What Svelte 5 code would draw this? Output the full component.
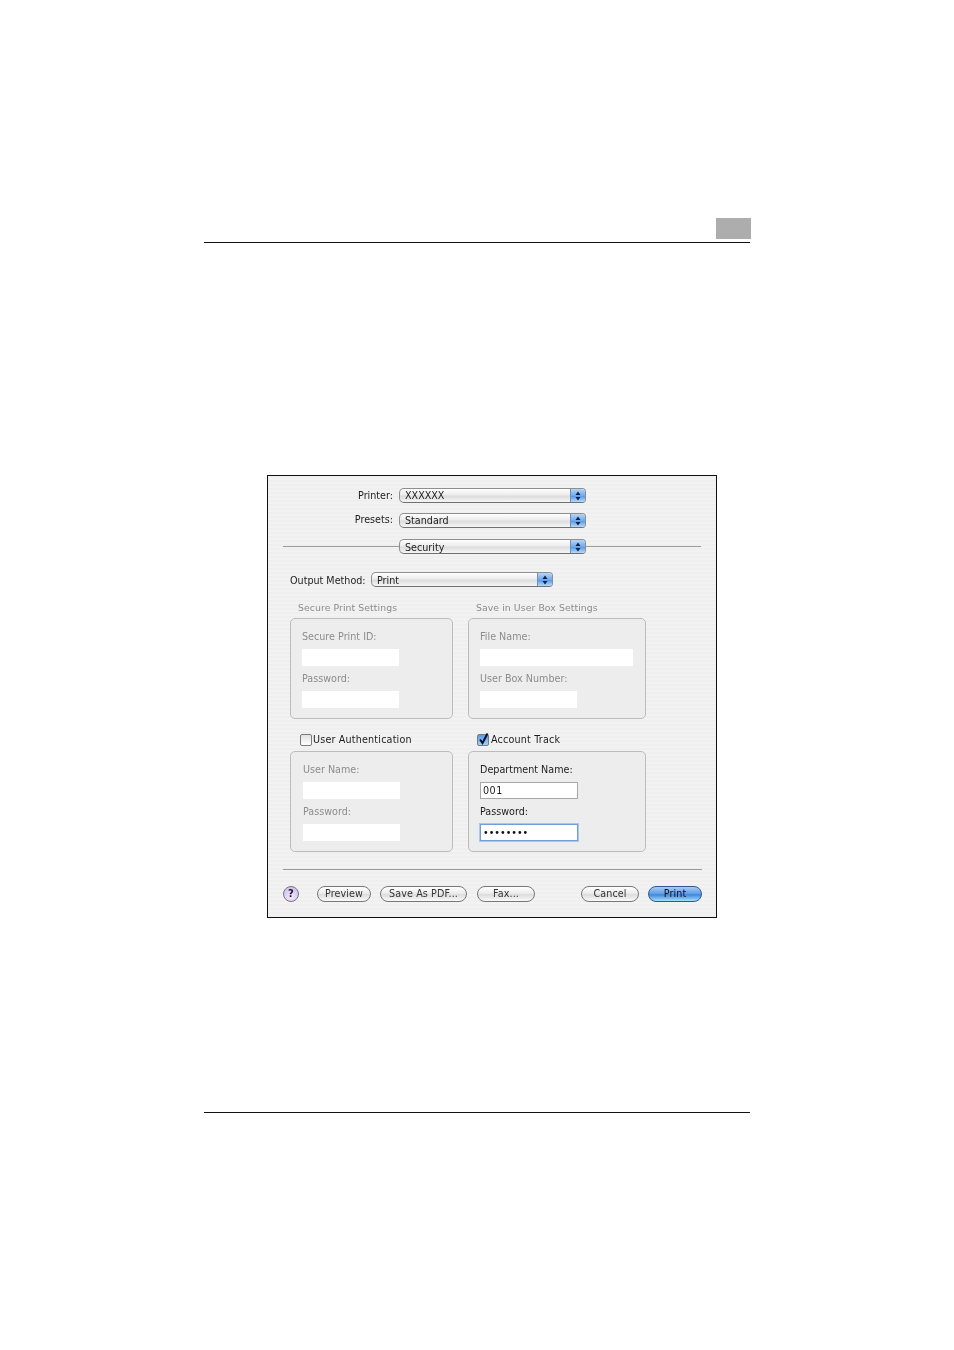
<script>
    const passDots = '••••••••';
</script>

{#snippet popup(text, cls)}
    <div class="popup {cls}">
        <span class="popup-text">{text}</span>
        <span class="stepper">
            <svg width="6" height="10" viewBox="0 0 6 10">
                <path d="M3 0.5 L5.5 4 L0.5 4 Z M3 9.5 L5.5 6 L0.5 6 Z" fill="#10204a" />
            </svg>
        </span>
    </div>
{/snippet}

{#snippet field(label, cls, value, dim)}
    <div class="label" class:dim>{label}</div>
    <div class="input {cls}" class:live={!dim}>{value}</div>
{/snippet}

<div class="page">
    <header class="head">
        <div class="tab"></div>
    </header>

    <div class="dialog">
        <div class="row top">
            <span class="row-label">Printer:</span>
            {@render popup('XXXXXX', 'wide')}
        </div>
        <div class="row presets">
            <span class="row-label up">Presets:</span>
            {@render popup('Standard', 'wide')}
        </div>
        <div class="section">
            {@render popup('Security', 'wide low')}
        </div>

        <div class="output">
            <span class="output-label">Output Method:</span>
            {@render popup('Print', 'mid low')}
        </div>

        <div class="groups first">
            <div class="group left">
                <div class="group-title">Secure Print Settings</div>
                <div class="box tight">
                    {@render field('Secure Print ID:', 'short', '', true)}
                    {@render field('Password:', 'short', '', true)}
                </div>
            </div>
            <div class="group right">
                <div class="group-title">Save in User Box Settings</div>
                <div class="box tight">
                    {@render field('File Name:', 'long', '', true)}
                    {@render field('User Box Number:', 'short', '', true)}
                </div>
            </div>
        </div>

        <div class="groups second">
            <div class="group left">
                <div class="check-title shifted">
                    <span class="check"></span>
                    <span>User Authentication</span>
                </div>
                <div class="box">
                    {@render field('User Name:', 'short', '', true)}
                    {@render field('Password:', 'short', '', true)}
                </div>
            </div>
            <div class="group right">
                <div class="check-title">
                    <span class="check on">
                        <svg width="13" height="14" viewBox="0 0 13 14">
                            <path d="M3 7.5 L5.5 11 L10.5 1.5" fill="none" stroke="#0b1230" stroke-width="2" />
                        </svg>
                    </span>
                    <span>Account Track</span>
                </div>
                <div class="box tight">
                    {@render field('Department Name:', 'short wider', '001', false)}
                    <div class="label">Password:</div>
                    <div class="input short wider live focus">{passDots}</div>
                </div>
            </div>
        </div>

        <div class="rule"></div>

        <div class="buttons">
            <span class="help">?</span>
            <button class="btn preview">Preview</button>
            <button class="btn pdf">Save As PDF...</button>
            <button class="btn fax">Fax...</button>
            <span class="spacer"></span>
            <button class="btn cancel">Cancel</button>
            <button class="btn print">Print</button>
        </div>
    </div>

    <div class="foot"></div>
</div>

<style>
:global(body) {
    margin: 0;
    background: #fff;
}

.page {
    width: 954px;
    height: 1350px;
    padding-top: 218px;
    box-sizing: border-box;
    font-family: "DejaVu Sans", sans-serif;
    font-size: 9.6px;
    color: #1c1c1c;
    overflow: hidden;
}

/* PAGE FURNITURE */
.head {
    width: 546px;
    height: 24px;
    margin-left: 204px;
    border-bottom: 1px solid #111;
}

.tab {
    width: 35px;
    height: 21px;
    margin-left: 512px;
    background: #adadad;
}

.foot {
    width: 546px;
    height: 1px;
    margin: 194px 0 0 204px;
    background: #111;
}

/* DIALOG */
.dialog {
    width: 450px;
    height: 443px;
    box-sizing: border-box;
    margin: 232px 0 0 267px;
    border: 1px solid #111;
    background: repeating-linear-gradient(#efefef 0, #efefef 2px, #f2f2f2 2px, #f2f2f2 4px);
    overflow: hidden;
}

/* the original is a soft scan */
.dialog > * {
    filter: blur(0.3px);
}

.row {
    display: flex;
    align-items: center;
    height: 15px;
    padding-left: 60px;
}

.row.top {
    margin-top: 12px;
}

.row.presets {
    margin-top: 10px;
}

.row-label {
    width: 65px;
    text-align: right;
    margin-right: 6px;
}

.row-label.up {
    margin-bottom: 2px;
}

.section {
    height: 15px;
    margin: 11px 15px 0;
    padding-left: 116px;
    background: linear-gradient(#9a9a9a, #9a9a9a) 0 7px / 100% 1px no-repeat;
}

.output {
    display: flex;
    align-items: center;
    height: 15px;
    margin-top: 18px;
    padding-left: 22px;
}

.output-label {
    width: 78px;
    margin: 2px 3px 0 0;
    white-space: nowrap;
}

/* POPUP */
.popup {
    display: flex;
    align-items: center;
    justify-content: space-between;
    height: 15px;
    box-sizing: border-box;
    border: 1px solid #8e8e8e;
    border-bottom-color: #6f6f6f;
    border-radius: 5px 4px 4px 5px;
    background: linear-gradient(#fff, #ececec 45%, #dcdcdc 55%, #f6f6f6);
    overflow: hidden;
}

.popup.wide {
    width: 187px;
}

.popup.mid {
    width: 182px;
}

.popup-text {
    padding-left: 5px;
    line-height: 13px;
}

.popup.low .popup-text {
    margin-top: 2px;
}

.stepper {
    display: flex;
    align-items: center;
    justify-content: center;
    width: 14px;
    height: 13px;
    background: linear-gradient(#b5d5f8, #72abec 50%, #5a9ae6 55%, #b5daf9);
    border-left: 1px solid #6d8fbd;
}

/* GROUPS */
.groups {
    display: flex;
    padding-left: 22px;
}

.groups.first {
    margin-top: 15px;
}

.groups.second {
    margin-top: 14px;
}

.group.left {
    width: 163px;
    margin-right: 15px;
}

.group.right {
    width: 178px;
}

.group-title {
    height: 12px;
    line-height: 12px;
    margin: 0 0 4px 8px;
    font-size: 9.3px;
    letter-spacing: 0.08px;
    color: #8c8c8c;
    white-space: nowrap;
}

.check-title {
    display: flex;
    align-items: center;
    gap: 2px;
    height: 13px;
    margin: 0 0 5px 9px;
    letter-spacing: 0.18px;
    white-space: nowrap;
}

.check-title.shifted {
    gap: 1px;
    margin-left: 10px;
}

.check {
    width: 10px;
    height: 10px;
    border: 1px solid #7a7a7a;
    border-radius: 2px;
    background: linear-gradient(#e2e2e2, #fff);
    position: relative;
}

.check.on {
    background: linear-gradient(#5c9be6, #a5d0f8);
}

.check svg {
    position: absolute;
    left: -1px;
    top: -3px;
}

.box {
    height: 101px;
    box-sizing: border-box;
    padding: 11px 12px 0;
    border: 1px solid #bcbcbc;
    border-radius: 5px;
    background: #ededed;
}

.box.tight {
    padding-left: 11px;
}

.label {
    height: 13px;
    line-height: 13px;
    white-space: nowrap;
    margin-bottom: 6px;
}

.label.dim {
    color: #8c8c8c;
}

.input {
    height: 17px;
    box-sizing: border-box;
    margin-bottom: 6px;
    padding-left: 2px;
    background: #fff;
    line-height: 15px;
}

.input.short {
    width: 97px;
}

.input.short.wider {
    width: 98px;
}

.input.long {
    width: 153px;
}

.input.live {
    border: 1px solid #a8a8a8;
    letter-spacing: 0.5px;
}

.input.focus {
    border: 1px solid #6f9fd8;
    box-shadow: 0 0 0 1px #a9c8ea;
    letter-spacing: 0;
    color: #111;
}

/* FOOTER */
.rule {
    height: 1px;
    margin: 17px 14px 0 15px;
    background: #9a9a9a;
}

.buttons {
    display: flex;
    align-items: center;
    height: 17px;
    margin-top: 15px;
    padding: 0 14px 0 15px;
}

.help {
    width: 16px;
    height: 16px;
    box-sizing: border-box;
    margin-right: 18px;
    border: 1px solid #777;
    border-radius: 50%;
    background: radial-gradient(circle at 50% 70%, #f3eaff, #c8b2f2);
    text-align: center;
    line-height: 14px;
    font-weight: bold;
    font-size: 10px;
}

.btn {
    height: 16px;
    box-sizing: border-box;
    padding: 0;
    border: 1px solid #777;
    border-radius: 8px;
    background: linear-gradient(#fff, #ececec 45%, #dcdcdc 55%, #fafafa);
    font: inherit;
    letter-spacing: 0.1px;
    line-height: 13px;
    color: #333;
}

.preview {
    width: 54px;
    margin-right: 9px;
}

.pdf {
    width: 87px;
    margin-right: 10px;
}

.fax {
    width: 58px;
}

.spacer {
    flex: 1;
}

.cancel {
    width: 58px;
    margin-right: 9px;
}

.print {
    width: 54px;
    border-color: #33588f;
    background: linear-gradient(#a9cdf5, #5c9be6 50%, #3f86dc 55%, #a5e0fb);
    color: #111;
}
</style>
